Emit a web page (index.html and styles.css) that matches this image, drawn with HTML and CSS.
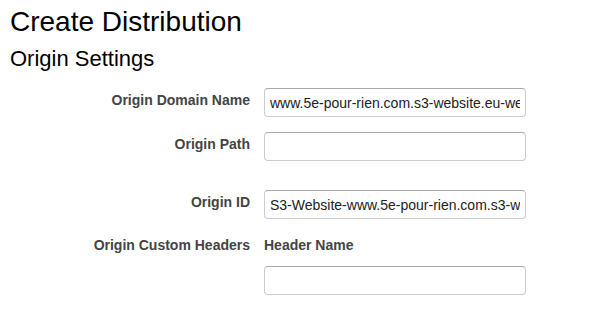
FILE: index.html
```html
<!DOCTYPE html>
<html lang="en">
<head>
    <meta charset="UTF-8">
    <title>Create Distribution</title>
    <link rel="stylesheet" href="styles.css">
</head>
<body>
    <!-- Heading -->
    <h1>Create Distribution</h1>
    <h2>Origin Settings</h2>

    <!-- Origin form -->
    <div class="form">
        <div class="row">
            <label class="label">Origin Domain Name</label>
            <input class="field" type="text" value="www.5e-pour-rien.com.s3-website.eu-west-1.amazonaws.com">
        </div>
        <div class="row row-tall">
            <label class="label">Origin Path</label>
            <input class="field" type="text">
        </div>
        <div class="row row-short">
            <label class="label">Origin ID</label>
            <input class="field" type="text" value="S3-Website-www.5e-pour-rien.com.s3-website.eu-west-1.amazonaws.com">
        </div>
        <div class="row">
            <label class="label">Origin Custom Headers</label>
            <div class="headers">
                <span class="sub-label">Header Name</span>
                <input class="field" type="text">
            </div>
        </div>
    </div>
</body>
</html>
```

FILE: styles.css
```css
body {
    font-family: "Liberation Sans", Arial, sans-serif;
    margin: 0;
    padding: 0 10px;
    background-color: #fff;
    color: #000;
}

h1 {
    font-size: 28px;
    font-weight: normal;
    line-height: 32px;
    margin: 6px 0 0;
}

h2 {
    font-size: 22px;
    font-weight: normal;
    line-height: 26px;
    margin: 8px 0 0;
}

.form {
    margin-top: 16px;
}

.row {
    display: grid;
    grid-template-columns: 240px 262px;
    column-gap: 14px;
    margin-bottom: 15px;
}

.row-tall {
    margin-bottom: 29px;
}

.row-short {
    margin-bottom: 14px;
}

.label {
    font-size: 14px;
    font-weight: bold;
    line-height: 20px;
    padding-top: 2px;
    text-align: right;
    color: #444;
}

.field {
    box-sizing: border-box;
    width: 262px;
    height: 29px;
    padding: 0 5px;
    font-family: "Liberation Sans", Arial, sans-serif;
    font-size: 14px;
    color: #222;
    border: 1px solid #ccc;
    border-top-color: #a9a9a9;
    border-radius: 4px;
    background-color: #fff;
}

.headers {
    display: flex;
    flex-direction: column;
}

.sub-label {
    font-size: 14px;
    font-weight: bold;
    line-height: 20px;
    padding-top: 2px;
    color: #444;
    margin-bottom: 11px;
}
```
